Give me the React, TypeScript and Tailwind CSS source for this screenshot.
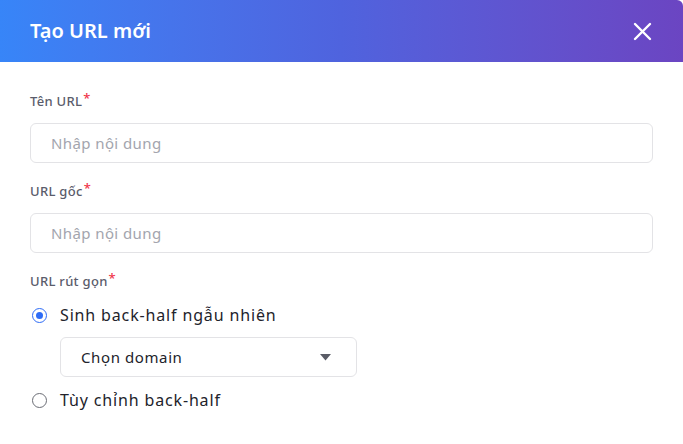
import React, { useState } from 'react';

const Label: React.FC<{ text: string }> = ({ text }) => (
  <div className="text-[13px] font-medium tracking-[0.3px] text-[#5a5c6b] leading-none">
    {text}
    <span className="text-[#f0364b] ml-[1px] relative -top-[3px]">*</span>
  </div>
);

const TextInput: React.FC = () => (
  <input
    type="text"
    placeholder="Nhập nội dung"
    className="w-full h-[40px] rounded-[6px] border border-[#e3e3e6] px-[20px] text-[15px] tracking-[0.4px] text-[#333] placeholder:text-[#a3a5ae] outline-none"
  />
);

const Radio: React.FC<{ checked: boolean; label: string; onClick: () => void }> = ({ checked, label, onClick }) => (
  <button type="button" onClick={onClick} className="flex items-center gap-[13px] text-left">
    <span
      className={
        checked
          ? 'w-[15px] h-[15px] rounded-full border-[1.5px] border-[#2e6cf6] flex items-center justify-center'
          : 'w-[15px] h-[15px] rounded-full border-[1.5px] border-[#6b6d75] flex items-center justify-center'
      }
    >
      {checked && <span className="w-[7px] h-[7px] rounded-full bg-[#2e6cf6]" />}
    </span>
    <span className="text-[16px] tracking-[0.85px] text-[#22232b]">{label}</span>
  </button>
);

export default function App() {
  const [mode, setMode] = useState<'random' | 'custom'>('random');

  return (
    <div className="w-[683px] h-[444px] bg-white overflow-hidden font-['Noto_Sans',_'Open_Sans',_sans-serif]">
      <div className="h-[62px] rounded-tr-[6px] bg-gradient-to-r from-[#3785f8] via-[#4f63de] to-[#6b45c2] flex items-center justify-between pl-[30px] pr-[31px]">
        <h2 className="text-white text-[20px] font-semibold">Tạo URL mới</h2>
        <button type="button" className="text-white">
          <svg width="19" height="19" viewBox="0 0 19 19" fill="none" stroke="currentColor" strokeWidth="2.4" strokeLinecap="round">
            <path d="M2 2L17 17M17 2L2 17" />
          </svg>
        </button>
      </div>

      <div className="px-[30px] pt-[33px] flex flex-col">
        <Label text="Tên URL" />
        <div className="mt-[15px]">
          <TextInput />
        </div>

        <div className="mt-[22px]">
          <Label text="URL gốc" />
        </div>
        <div className="mt-[15px]">
          <TextInput />
        </div>

        <div className="mt-[22px]">
          <Label text="URL rút gọn" />
        </div>

        <div className="mt-[15px] pl-[2px]">
          <Radio checked={mode === 'random'} label="Sinh back-half ngẫu nhiên" onClick={() => setMode('random')} />
        </div>

        <div className="mt-[10px] ml-[30px] w-[297px] h-[40px] rounded-[6px] border border-[#e3e3e6] flex items-center justify-between pl-[20px] pr-[25px]">
          <span className="text-[15px] tracking-[0.6px] text-[#22232b]">Chọn domain</span>
          <svg width="11" height="7" viewBox="0 0 11 7">
            <path d="M0 0H11L5.5 6.5Z" fill="#5a5c66" />
          </svg>
        </div>

        <div className="mt-[11px] pl-[2px]">
          <Radio checked={mode === 'custom'} label="Tùy chỉnh back-half" onClick={() => setMode('custom')} />
        </div>
      </div>
    </div>
  );
}
